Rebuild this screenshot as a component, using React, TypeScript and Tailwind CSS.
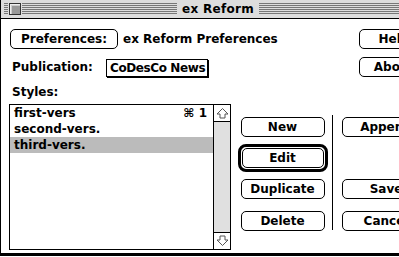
import React from "react";

const font = "font-['DejaVu_Sans',sans-serif] font-bold text-[12px] leading-none text-black";

function MacButton({
  label,
  className = "",
}: {
  label: string;
  className?: string;
}) {
  return (
    <div
      className={`flex h-[20px] items-center justify-center whitespace-nowrap rounded-[5px] border border-black bg-white ${className}`}
    >
      {label}
    </div>
  );
}

function ArrowUp() {
  return (
    <svg width="13" height="12" viewBox="0 0 13 12" className="block">
      <path d="M6.5 1.5 L12 7 L9 7 L9 11 L4 11 L4 7 L1 7 Z" fill="white" stroke="#555" strokeWidth="1" />
    </svg>
  );
}

function ArrowDown() {
  return (
    <svg width="13" height="12" viewBox="0 0 13 12" className="block">
      <path d="M6.5 10.5 L12 5 L9 5 L9 1 L4 1 L4 5 L1 5 Z" fill="white" stroke="#555" strokeWidth="1" />
    </svg>
  );
}

const stripes =
  "h-[12px] bg-[repeating-linear-gradient(to_bottom,#777_0px,#777_1px,#dddddd_1px,#dddddd_2px)]";

export default function App() {
  const styles = [
    { name: "first-vers", key: "⌘ 1" },
    { name: "second-vers." },
    { name: "third-vers.", selected: true },
  ];

  return (
    <div className={`h-[257px] w-[399px] overflow-hidden bg-white ${font}`}>
      <div className="flex h-[256px] w-[440px] flex-col border-b-[3px] border-l border-black">
        {/* title bar */}
        <div className="flex h-[19px] shrink-0 items-center border-b border-black bg-[#dddddd] px-[3px]">
          <div className={`${stripes} w-[4px]`} />
          <div className="mx-[1px] flex h-[12px] w-[12px] items-center justify-center border border-[#333] bg-[#eee]">
            <div className="h-[9px] w-[9px] bg-[#999] shadow-[inset_1px_1px_0_#ccc]" />
          </div>
          <div className={`${stripes} w-[155px]`} />
          <div className="whitespace-nowrap px-[5px] tracking-[0.3px]">ex Reform</div>
          <div className={`${stripes} flex-1`} />
        </div>

        {/* preferences row */}
        <div className="mt-[10px] flex items-center">
          <MacButton label="Preferences:" className="ml-[9px] w-[108px]" />
          <span className="ml-[5px] whitespace-nowrap">ex Reform Preferences</span>
          <MacButton label="Help" className="ml-auto mr-[11px] w-[70px]" />
        </div>

        {/* publication row */}
        <div className="mt-[8px] flex items-center">
          <span className="ml-[11px] w-[94px]">Publication:</span>
          <div className="mt-[2px] flex h-[18px] w-[102px] items-center whitespace-nowrap border border-black pl-[3px] tracking-[-0.4px] shadow-[1px_1px_0_#000]">
            CoDesCo News
          </div>
          <MacButton label="About" className="ml-auto mr-[11px] w-[70px]" />
        </div>

        <div className="ml-[11px] mt-[9px]">Styles:</div>

        {/* styles list + buttons */}
        <div className="mt-[6px] flex">
          <div className="ml-[8px] flex h-[146px] w-[222px] border border-black">
            <div className="flex flex-1 flex-col">
              {styles.map((s) => (
                <div
                  key={s.name}
                  className={`flex h-[16px] items-center pl-[4px] pr-[6px] ${s.selected ? "bg-[#bbbbbb]" : ""}`}
                >
                  <span className="flex-1">{s.name}</span>
                  {s.key && <span>{s.key}</span>}
                </div>
              ))}
            </div>
            <div className="flex w-[17px] flex-col border-l border-black bg-[#e0e0e0]">
              <div className="flex h-[17px] items-center justify-center border-b border-black bg-white">
                <ArrowUp />
              </div>
              <div className="flex-1" />
              <div className="flex h-[17px] items-center justify-center border-t border-black bg-white">
                <ArrowDown />
              </div>
            </div>
          </div>

          <div className="ml-[6px] mt-[13px] flex w-[91px] flex-col items-center">
            <MacButton label="New" className="w-[84px]" />
            <div className="mt-[7px] rounded-[8px] border-[3px] border-black p-[1px]">
              <MacButton label="Edit" className="w-[82px]" />
            </div>
            <MacButton label="Duplicate" className="mt-[7px] w-[84px]" />
            <MacButton label="Delete" className="mt-[12px] w-[84px]" />
          </div>

          <div className="ml-[4px] mt-[11px] h-[115px] w-[1px] bg-black" />

          <div className="ml-[9px] mt-[13px] flex w-[90px] flex-col">
            <MacButton label="Append" className="w-[88px]" />
            <MacButton label="Save" className="mt-[42px] w-[88px]" />
            <MacButton label="Cancel" className="mt-[12px] w-[88px]" />
          </div>
        </div>
      </div>
    </div>
  );
}
